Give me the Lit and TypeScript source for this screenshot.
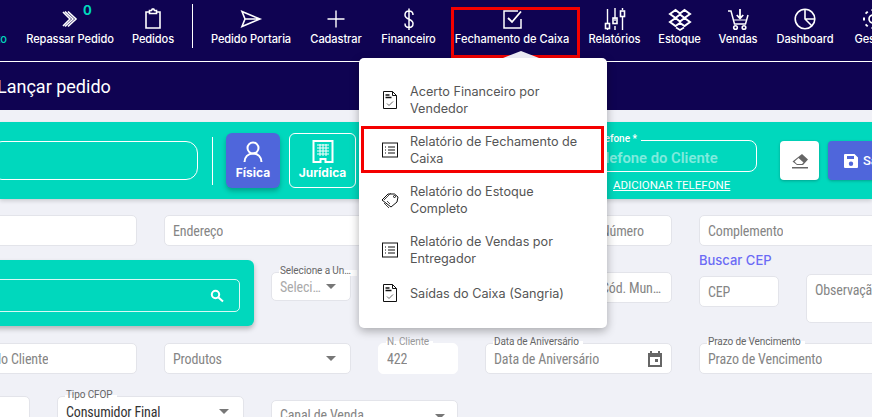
import { LitElement, html, css, svg } from "lit";
import { customElement } from "lit/decorators.js";

const S = (body: unknown, w = 24, h = 24) => html`<svg width=${w} height=${h} viewBox="0 0 ${w} ${h}" fill="none" stroke="currentColor" stroke-width="1.6">${body}</svg>`;

const navIcons: Record<string, unknown> = {
  none: S(svg``),
  chev: S(svg`<path d="M5 5l7 7-7 7M10 4.500l8 7.500-8 7.500M7 4.500l8 7.500-8 7.500"/>`),
  clip: S(svg`<path d="M8.500 5H5v16h14V5h-3.500"/><path d="M8.500 6.500V3.500h2l.8-1.500h1.400l.8 1.500h2v3z"/>`),
  plane: S(svg`<path d="M3 4.500l18 7.500-18 7.500 3-7.500zM6 12h15"/>`),
  plus: S(svg`<path d="M12 3.500v17M3.500 12h17" stroke-width="1.400"/>`),
  dollar: S(svg`<path d="M16 8c0-2.500-1.800-4-4-4S8 5.500 8 8c0 5 8 3.500 8 8.500 0 2.500-1.800 4-4 4s-4-1.500-4-4M12 1.500v21.500" stroke-width="1.500"/>`),
  check: S(svg`<path d="M21 12v9H4V4h14" stroke-width="1.500"/><path d="M8 11l4 4 9-10.500" stroke-width="1.800"/>`),
  sliders: S(svg`<path d="M4.500 3v14.500M4.500 22.500V24M12 2v13M12 20v4M19.500 2v2M19.500 10v14" stroke-width="1.400"/><rect x="2.500" y="17.500" width="4" height="5"/><rect x="10" y="12" width="4" height="5.500"/><rect x="17.500" y="5" width="4" height="5.500"/>`, 24, 26),
  box: S(svg`<path d="M7.500 3L2 7l5.500 4L2 15l5.500 4 4.500-3 4.500 3 5.500-4-5.500-4L22 7l-5.500-4L12 6.500zM7.500 11L12 7.500l4.500 3.500L12 14.500z" stroke-width="2"/><path d="M8 20.500l4 2.500 4-2.500" stroke-width="1.600"/>`),
  cart: S(svg`<path d="M2 4h3l3.500 13h11L22 8" stroke-width="1.500"/><circle cx="9.500" cy="20.500" r="1.800"/><circle cx="18" cy="20.500" r="1.800"/><path d="M14 2v9M10.800 8l3.200 3.500L17.200 8" stroke-width="1.800"/><path d="M7 13h13" stroke-width="1"/>`),
  pie: S(svg`<circle cx="12" cy="12" r="9.800"/><path d="M12 2.200V12l7 7M12 12h9.800"/>`),
  gear: S(svg`<circle cx="12" cy="12" r="4"/><path d="M12 4v-2M12 22v-2M4 12H2M22 12h-2M6.300 6.300L5 5M19 19l-1.300-1.300M6.300 17.700L5 19M19 5l-1.300 1.300" stroke-width="3"/>`),
};

const navItems = [
  { icon: "none", label: "Orçamento", w: 60, active: true },
  { icon: "chev", label: "Repassar Pedido", w: 88, badge: "0" },
  { icon: "clip", label: "Pedidos", w: 42 },
  { divider: true },
  { icon: "plane", label: "Pedido Portaria", w: 80 },
  { icon: "plus", label: "Cadastrar", w: 54 },
  { icon: "dollar", label: "Financeiro", w: 55 },
  { icon: "check", label: "Fechamento de Caixa", w: 116, marked: true },
  { icon: "sliders", label: "Relatórios", w: 53 },
  { icon: "box", label: "Estoque", w: 41 },
  { icon: "cart", label: "Vendas", w: 40 },
  { icon: "pie", label: "Dashboard", w: 58 },
  { icon: "gear", label: "Gestão", w: 42 },
];

const M = (body: unknown) => html`<svg class="micon" width="18" height="20" viewBox="0 0 18 20" fill="none" stroke="#111" stroke-width="1">${body}</svg>`;
const docIcon = M(svg`<path d="M2.500 1.500h9l4 4v13h-13z"/><path d="M11.500 1.500v4h4"/><path d="M4.500 5h4M4.500 7.500h6" stroke-width="1.500"/><path d="M6 13.500l2 2 4-4" stroke="#666"/>`);
const listIcon = M(svg`<path d="M1 3h16M1 17h16M1.500 3v14M16.500 3v14"/><path d="M4 7h1M7 7h7M4 10h1M7 10h7M4 13h1M7 13h7" stroke-width="1.200"/>`);
const tagIcon = M(svg`<path d="M1 10l6-6h6.500l3.500 3-1 5-6 5z"/><path d="M3 13l5 5M10 3l-7 7M6 11l3 3" stroke="#444"/><circle cx="13.500" cy="6.500" r="1"/>`);

const menuItems = [
  { icon: docIcon, label: "Acerto Financeiro por Vendedor" },
  { icon: listIcon, label: "Relatório de Fechamento de Caixa", marked: true },
  { icon: tagIcon, label: "Relatório do Estoque Completo" },
  { icon: listIcon, label: "Relatório de Vendas por Entregador" },
  { icon: docIcon, label: "Saídas do Caixa (Sangria)" },
];

@customElement("app-root")
export class AppRoot extends LitElement {
  static styles = css`
    :host { display: block; position: relative; width: 872px; height: 417px; overflow: hidden; background: #f0f1f7; font-family: Roboto, sans-serif; }
    * { box-sizing: border-box; }
    .top { background: #0f0352; height: 110px; }
    nav { height: 62px; border-bottom: 1px solid #fff; display: flex; gap: 18px; margin-left: -52px; width: 1000px; }
    .nav-item { position: relative; flex: none; display: flex; flex-direction: column; align-items: center; padding-top: 7px; color: #fff; }
    .nav-item.active { color: #00d8bd; }
    .nav-icon { height: 24px; display: flex; align-items: center; justify-content: center; }
    .nav-label { font: 500 11.100px/14px Inter, sans-serif; letter-spacing: -0.1px; white-space: nowrap; margin-top: 1px; }
    .marked .nav-label { letter-spacing: 0; }
    .badge { position: absolute; left: 57px; top: 3px; font: 700 13px/14px Inter, sans-serif; color: #00d8bd; }
    .marked::after { content: ""; position: absolute; border: 3px solid #f40000; pointer-events: none; }
    .nav-item.marked::after { left: -3px; right: -10px; top: 7px; height: 45px; }
    .nav-div { flex: none; width: 1px; height: 44px; margin-top: 4px; background: #fff; }
    h1 { margin: 0 0 0 -3px; font: 400 18px/49px Roboto, sans-serif; color: #fff; }

    .band { margin-top: 12px; height: 77px; background: #00d8bd; display: flex; align-items: center; box-shadow: 0 2px 4px rgba(0,0,0,.15); }
    .band > * { flex: none; }
    .outline { margin-left: -10px; width: 208px; height: 39px; border: 1px solid #fff; border-radius: 12px; }
    .vline { width: 1px; height: 48px; background: #fff; margin-left: 14px; }
    .kind { height: 55px; border-radius: 6px; display: flex; flex-direction: column; align-items: center; justify-content: center; gap: 1px; color: #fff; font: 700 12px/16px Inter, sans-serif; }
    .kind.on { width: 54px; margin-left: 13px; background: #4f66db; box-shadow: 0 3px 5px rgba(0,0,0,.25); }
    .kind.off { width: 67px; margin-left: 9px; border: 1px solid #fff; }
    .tel { align-self: flex-start; margin: 18px 0 0 224px; width: 177px; }
    .tel-box { position: relative; height: 32px; border: 1px solid #fff; border-radius: 8px; display: flex; align-items: center; padding: 4px 0 0 8px; font: 600 14.800px Roboto, sans-serif; color: rgba(255,255,255,.5); white-space: nowrap; }
    .tel-label { position: absolute; left: 8px; top: -9px; padding: 0 4px 0 2px; background: #00d8bd; font: 500 10px/14px Roboto, sans-serif; color: #fff; }
    .tel-link { display: block; margin-top: 5px; margin-left: 33px; font: 400 11.500px/16px Roboto, sans-serif; color: #fff; text-decoration: underline; white-space: nowrap; }
    .erase { width: 39px; height: 39px; margin-left: 23px; border-radius: 4px; background: #fff; display: flex; align-items: center; justify-content: center; box-shadow: 0 1px 3px rgba(0,0,0,.25); }
    .save { width: 90px; height: 39px; margin-left: 9px; border-radius: 4px; background: #4f66db; color: #fff; display: flex; align-items: center; gap: 5px; padding-left: 16px; font: 500 13px Roboto, sans-serif; box-shadow: 0 1px 3px rgba(0,0,0,.25); }

    .grid { margin-left: -50px; display: grid; grid-template-columns: repeat(9, 79.500px); column-gap: 27.500px; align-items: start; }
    .r1 { margin-top: 16px; } .r2 { margin-top: 14px; } .r3 { margin-top: 17px; } .r4 { margin-top: 22px; }
    .c1 { grid-column: 1; } .c12 { grid-column: 1 / span 2; } .c2 { grid-column: 2 / span 2; } .c16 { grid-column: 3 / span 4; }
    .c3 { grid-column: 3 / span 2; } .c4 { grid-column: 4; } .c45 { grid-column: 4 / span 2; } .c5 { grid-column: 5; }
    .c6 { grid-column: 6 / span 2; } .c7 { grid-column: 7; } .c8 { grid-column: 8 / span 2; } .c8a { grid-column: 8; } .c8w { grid-column: 8 / span 2; width: 200px; } .c9 { grid-column: 9 / span 2; width: 200px; }
    .c13 { grid-column: 1 / span 3; }
    .f { position: relative; height: 31px; background: #fff; border: 1px solid #e3e4ea; border-radius: 5px; display: flex; align-items: center; justify-content: space-between; padding: 0 8px; font: 400 14px/16px Roboto, sans-serif; font-stretch: 85%; letter-spacing: -0.15px; color: #858585; white-space: nowrap; }
    .f span { overflow: hidden; text-overflow: ellipsis; }
    .f.dark { color: #333; }
    .f.bare { border-color: #fff; }
    .f.light { color: #aaa; }
    .f label { position: absolute; left: 7px; top: -8px; padding: 0 4px 0 1px; background: linear-gradient(#f0f1f7 50%, #fff 50%); font: 400 10px/11px Roboto, sans-serif; letter-spacing: -0.1px; color: #666; max-width: 100%; overflow: hidden; text-overflow: ellipsis; }
    .f label.faint { color: #999; }
    .caret { flex: none; width: 0; height: 0; margin-right: 6px; border: 5px solid transparent; border-top: 5px solid #777; border-bottom: 0; }
    .search { height: 66px; margin-right: -10px; background: #00d8bd; border-radius: 0 6px 6px 0; box-shadow: 0 3px 5px rgba(0,0,0,.25); padding: 19px 14px 0 0; }
    .search-in { height: 33px; border: 1px solid rgba(255,255,255,.85); border-radius: 5px; display: flex; align-items: center; justify-content: flex-end; padding-right: 15px; color: #fff; }
    .m12 { margin-top: 12px; } .h28 { height: 29px; }
    .buscar { font: 500 13px/16px Inter, sans-serif; color: #6b6bf5; margin-bottom: 8px; margin-top: -8px; height: 16px; white-space: nowrap; }
    .obs { margin-top: 14px; height: 49px; align-items: flex-start; padding-top: 7px; }
    .r4x { margin-top: 4px; align-items: flex-start; padding-top: 6px; }
    .r4x .caret { margin-top: 7px; margin-right: 4px; }

    .menu { position: absolute; left: 359px; top: 58px; width: 248px; height: 270px; padding-top: 17px; background: #fff; border-radius: 5px; box-shadow: 0 3px 10px rgba(0,0,0,.3); }
    .menu::before { content: ""; position: absolute; left: 144px; top: -7px; border: 18px solid transparent; border-top: 0; border-bottom: 7px solid #e9e9f2; }
    .mi { position: relative; display: flex; align-items: center; padding: 8px 14px 8px 22px; gap: 11px; font: 400 12.650px/17px Inter, sans-serif; color: #555; }
    .mi.marked::after { left: 2px; right: 3px; top: 1px; bottom: 2px; }
    .micon { flex: none; }
  `;

  render() {
    return html`
      <div class="top">
        <nav>
          ${navItems.map((n: any) => n.divider ? html`<div class="nav-div"></div>` : html`
            <div class="nav-item ${n.active ? "active" : ""} ${n.marked ? "marked" : ""}" style="width:${n.w}px">
              <div class="nav-icon">${navIcons[n.icon]}</div>
              <div class="nav-label">${n.label}</div>
              ${n.badge ? html`<div class="badge">${n.badge}</div>` : ""}
            </div>`)}
        </nav>
        <h1>Lançar pedido</h1>
      </div>

      <section class="band">
        <div class="outline"></div>
        <div class="vline"></div>
        <div class="kind on">
          <svg width="24" height="24" viewBox="0 0 24 24" fill="none" stroke="#fff" stroke-width="2"><circle cx="12" cy="8" r="5.500"/><path d="M3.500 22c0-5 3.500-8.500 8.500-8.500s8.500 3.500 8.500 8.500"/></svg>
          Física
        </div>
        <div class="kind off">
          <svg width="22" height="24" viewBox="0 0 22 24" fill="none" stroke="#fff" stroke-width="1"><path d="M1.500 1h19v21h-7v-3h-5v3h-7z" stroke-width="2"/><path d="M5 5h12M5 8h12M5 11h12M5 14h12M8 4v12M11 4v12M14 4v12"/></svg>
          Jurídica
        </div>
        <div class="tel">
          <div class="tel-box"><span class="tel-label">Telefone *</span>Telefone do Cliente</div>
          <a class="tel-link">ADICIONAR TELEFONE</a>
        </div>
        <div class="erase">
          <svg width="18" height="16" viewBox="0 0 18 16" fill="#666"><path d="M11 1l6 5.500-5 5.500H6L1.500 8.500zM3.500 8.500L6 11h5L12.500 9.500 7.500 5z"/><path d="M1 14h16v1.500H1z"/></svg>
        </div>
        <div class="save">
          <svg width="14" height="14" viewBox="0 0 14 14" fill="#fff"><path d="M1 0h9.500L14 3.500V13a1 1 0 0 1-1 1H1a1 1 0 0 1-1-1V1a1 1 0 0 1 1-1zM3 2v3h7V2zM7 7.500a2.200 2.200 0 1 0 0 4.400 2.200 2.200 0 0 0 0-4.400z" fill-rule="evenodd"/></svg>
          Salvar
        </div>
      </section>

      <div class="grid r1">
        <div class="f c12"><span>Nome</span></div>
        <div class="f c16"><span>Endereço</span></div>
        <div class="f c7"><span>Número</span></div>
        <div class="f c8w"><span>Complemento</span></div>
      </div>

      <div class="grid r2">
        <div class="search c13">
          <div class="search-in">
            <svg width="14" height="14" viewBox="0 0 14 14" fill="none" stroke="#fff"><circle cx="5.500" cy="5.500" r="3.700" stroke-width="2"/><path d="M8.500 8.500l4.500 4" stroke-width="2"/></svg>
          </div>
        </div>
        <div class="f c4 m12 h28 light"><label>Selecione a Unidade</label><span>Selecione</span><i class="caret"></i></div>
        <div class="f c7 m12"><span>Cód. Município</span></div>
        <div class="c8a">
          <div class="buscar">Buscar CEP</div>
          <div class="f"><span>CEP</span></div>
        </div>
        <div class="f c9 obs"><span>Observação</span></div>
      </div>

      <div class="grid r3">
        <div class="f c12"><span>Nome do Cliente</span></div>
        <div class="f c3"><span>Produtos</span><i class="caret"></i></div>
        <div class="f c5 bare"><label class="faint">N. Cliente</label><span>422</span></div>
        <div class="f c6"><label>Data de Aniversário</label><span>Data de Aniversário</span>
          <svg width="16" height="16" viewBox="0 0 16 16" fill="#666" style="flex:none"><path d="M3 0h2v2h6V0h2v2h2v14H1V2h2zM3 6v8h10V6zM8 8h3v3H8z" fill-rule="evenodd"/></svg>
        </div>
        <div class="f c8"><label>Prazo de Vencimento</label><span>Prazo de Vencimento</span></div>
      </div>

      <div class="grid r4">
        <div class="f c1"></div>
        <div class="f c2 dark"><label>Tipo CFOP</label><span>Consumidor Final</span><i class="caret"></i></div>
        <div class="f c45 r4x"><span>Canal de Venda</span><i class="caret"></i></div>
      </div>

      <div class="menu">
        ${menuItems.map(m => html`<div class="mi ${m.marked ? "marked" : ""}">${m.icon}<span>${m.label}</span></div>`)}
      </div>
    `;
  }
}
